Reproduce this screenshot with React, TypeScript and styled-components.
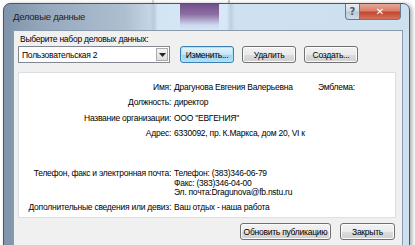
import React from "react";
import styled, { createGlobalStyle } from "styled-components";

const Global = createGlobalStyle`
  html, body { margin: 0; padding: 0; background: #ffffff; overflow: hidden; }
  body {
    font-family: "Liberation Sans", Arial, sans-serif;
    font-size: 8.5px;
    letter-spacing: -0.25px;
  }
`;

const Desktop = styled.div`
  width: 415px;
  height: 245px;
  overflow: hidden;
  padding: 3px 0 0 3px;
  box-sizing: border-box;
  background: linear-gradient(90deg, #ffffff 0, #ffffff 152px, #d8d8d8 152px, #d8d8d8 154px, #ffffff 154px, #ffffff 228px, #c9c9c9 228px, #c9c9c9 230px, #ffffff 230px);
`;

const Frame = styled.div`
  width: 407px;
  height: 260px;
  box-sizing: border-box;
  border: 1px solid #47586b;
  border-radius: 7px 7px 0 0;
  background: linear-gradient(90deg, #7f93aa 0%, #95a8bd 10%, #aebfd0 30%, #c5d5e5 36%, #b9cadb 37%, #d3e4f3 38%, #d8e8f6 55%, #bcd0e3 56%, #cfe1f1 57%, #cde0f0 100%);
  display: flex;
  flex-direction: column;
  box-shadow: 2px 1px 4px rgba(0, 0, 0, 0.35);
`;

const TitleBar = styled.div`
  height: 26px;
  display: flex;
  align-items: flex-start;
  padding: 0 8px 0 9px;
  background: linear-gradient(180deg, #72508a 0%, #8d6fa3 40%, rgba(190, 190, 225, 0.4) 80%, rgba(200, 215, 235, 0) 100%) 176px 0 / 39px 100% no-repeat;
`;

const Title = styled.div`
  font-size: 9.5px;
  color: #1e1e1e;
  margin-top: 7px;
  flex: 1;
`;

const CaptionBtns = styled.div`
  display: flex;
`;

const CapBtn = styled.div<{ $close?: boolean }>`
  width: ${(p) => (p.$close ? "41px" : "15px")};
  height: 16px;
  box-sizing: border-box;
  border: 1px solid #6a7a8c;
  border-top: none;
  border-left: ${(p) => (p.$close ? "none" : "1px solid #6a7a8c")};
  border-radius: ${(p) => (p.$close ? "0 0 4px 0" : "0 0 0 4px")};
  background: ${(p) =>
    p.$close
      ? "linear-gradient(180deg, #e7a899 0%, #d8806b 45%, #c4472f 55%, #d4735b 100%)"
      : "linear-gradient(180deg, #e6edf4 0%, #d3dce6 45%, #bcc8d5 55%, #d3dee9 100%)"};
  display: flex;
  align-items: center;
  justify-content: center;
  font-size: 10px;
  letter-spacing: 0;
  font-weight: bold;
  color: ${(p) => (p.$close ? "#ffffff" : "#4f5d6c")};
  font-family: "DejaVu Sans", sans-serif;
`;

const Client = styled.div`
  flex: 1;
  margin: 0 6px 0 9px;
  background: #f0f0f0;
  border: 1px solid #8a9bae;
  border-bottom: none;
  display: flex;
  flex-direction: column;
  padding: 2px 6px 0 4px;
  color: #000;
`;

const Label = styled.div`
  height: 13px;
  line-height: 13px;
  padding-left: 2px;
`;

const TopRow = styled.div`
  display: flex;
  align-items: center;
`;

const Combo = styled.div`
  width: 152px;
  height: 17px;
  box-sizing: border-box;
  border: 1px solid #828790;
  background: #fff;
  display: flex;
  align-items: center;
  padding-left: 3px;
  margin-right: 10px;
`;

const ComboText = styled.div`
  flex: 1;
`;

const ComboArrow = styled.div`
  width: 12px;
  height: 13px;
  margin-right: 1px;
  box-sizing: border-box;
  border: 1px solid #acacac;
  background: linear-gradient(180deg, #f4f4f4, #dedede);
  display: flex;
  align-items: center;
  justify-content: center;
`;

const Button = styled.div<{ $w: number; $def?: boolean; $gap?: number }>`
  width: ${(p) => p.$w}px;
  height: 17px;
  margin-left: ${(p) => p.$gap ?? 0}px;
  box-sizing: border-box;
  border: 1px solid ${(p) => (p.$def ? "#3c7fb1" : "#707070")};
  border-radius: 3px;
  background: ${(p) =>
    p.$def
      ? "linear-gradient(180deg, #e5f4fc 0%, #c4e5f6 50%, #98d1ef 51%, #b6e0f5 100%)"
      : "linear-gradient(180deg, #f2f2f2 0%, #ebebeb 50%, #dddddd 51%, #cfcfcf 100%)"};
  box-shadow: inset 0 0 0 1px ${(p) => (p.$def ? "#a6e6fc" : "#fcfcfc")};
  display: flex;
  align-items: center;
  justify-content: center;
  white-space: nowrap;
`;

const Panel = styled.div`
  margin-top: 9px;
  height: 146px;
  box-sizing: border-box;
  background: #fff;
  border: 1px solid #d8e0e6;
  padding-top: 7px;
  display: grid;
  grid-template-columns: 152px 141px 1fr;
  grid-auto-rows: min-content;
  column-gap: 3px;
`;

const Key = styled.div<{ $gap?: number; $tight?: boolean }>`
  display: flex;
  justify-content: flex-end;
  line-height: ${(p) => (p.$tight ? "9.5px" : "15.3px")};
  margin-top: ${(p) => p.$gap ?? 0}px;
  white-space: nowrap;
`;

const Val = styled.div<{ $gap?: number; $tight?: boolean; $span?: boolean }>`
  line-height: ${(p) => (p.$tight ? "9.5px" : "15.3px")};
  margin-top: ${(p) => p.$gap ?? 0}px;
  white-space: nowrap;
  grid-column: ${(p) => (p.$span ? "2 / span 2" : "auto")};
`;

const Emblem = styled.div`
  line-height: 15.3px;
`;

const Empty = styled.div``;

const BottomRow = styled.div`
  display: flex;
  justify-content: flex-end;
  margin-top: 5px;
  padding-right: 1px;
`;

export default function App() {
  return (
    <>
      <Global />
      <Desktop>
        <Frame>
          <TitleBar>
            <Title>Деловые данные</Title>
            <CaptionBtns>
              <CapBtn>?</CapBtn>
              <CapBtn $close>✕</CapBtn>
            </CaptionBtns>
          </TitleBar>
          <Client>
            <Label>Выберите набор деловых данных:</Label>
            <TopRow>
              <Combo>
                <ComboText>Пользовательская 2</ComboText>
                <ComboArrow>
                  <svg width="7" height="4" viewBox="0 0 7 4">
                    <path d="M0 0h7L3.5 4z" fill="#222" />
                  </svg>
                </ComboArrow>
              </Combo>
              <Button $w={54} $def>Изменить...</Button>
              <Button $w={54} $gap={8}>Удалить</Button>
              <Button $w={54} $gap={8}>Создать...</Button>
            </TopRow>
            <Panel>
              <Key>Имя:</Key>
              <Val>Драгунова Евгения Валерьевна</Val>
              <Emblem>Эмблема:</Emblem>
              <Key>Должность:</Key>
              <Val>директор</Val>
              <Empty />
              <Key>Название организации:</Key>
              <Val>ООО "ЕВГЕНИЯ"</Val>
              <Empty />
              <Key>Адрес:</Key>
              <Val $span>6330092, пр. К.Маркса, дом 20, VI к</Val>
              <Key $gap={28} $tight>Телефон, факс и электронная почта:</Key>
              <Val $gap={28} $tight $span>
                Телефон: (383)346-06-79
                <br />
                Факс: (383)346-04-00
                <br />
                Эл. почта:Dragunova@fb.nstu.ru
              </Val>
              <Key $gap={2}>Дополнительные сведения или девиз:</Key>
              <Val $gap={2} $span>Ваш отдых - наша работа</Val>
            </Panel>
            <BottomRow>
              <Button $w={91}>Обновить публикацию</Button>
              <Button $w={55} $gap={9}>Закрыть</Button>
            </BottomRow>
          </Client>
        </Frame>
      </Desktop>
    </>
  );
}
